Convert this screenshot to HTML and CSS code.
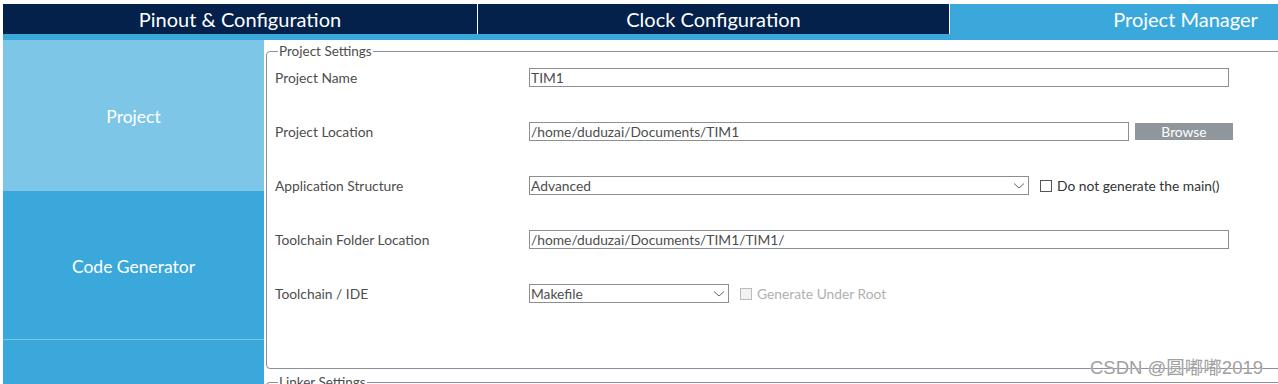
FILE: index.html
```html
<!DOCTYPE html>
<html>
	<head>
		<meta charset="utf-8"/>
		<title>Project Manager</title>
		<link rel="stylesheet" href="styles.css">
	</head>
	<body>
		<div class="tabs">
			<div class="tab">Pinout &amp; Configuration</div>
			<div class="tab">Clock Configuration</div>
			<div class="tab active">Project Manager</div>
		</div>

		<div class="main">
			<nav class="side">
				<div class="side-item current">Project</div>
				<div class="side-item">Code Generator</div>
				<div class="side-item"></div>
			</nav>

			<section class="content">
				<fieldset class="group">
					<legend>Project Settings</legend>

					<div class="row">
						<label class="label">Project Name</label>
						<div class="field wide">TIM1</div>
					</div>

					<div class="row">
						<label class="label">Project Location</label>
						<div class="field mid">/home/duduzai/Documents/TIM1</div>
						<button class="browse">Browse</button>
					</div>

					<div class="row">
						<label class="label">Application Structure</label>
						<div class="field select half">
							Advanced
							<svg class="chev" width="12" height="8" viewBox="0 0 12 8"><path d="M1 1.5 L6 6 L11 1.5" fill="none" stroke="#666" stroke-width="1"/></svg>
						</div>
						<span class="check"><span class="box"></span>Do not generate the main()</span>
					</div>

					<div class="row">
						<label class="label">Toolchain Folder Location</label>
						<div class="field wide">/home/duduzai/Documents/TIM1/TIM1/</div>
					</div>

					<div class="row">
						<label class="label">Toolchain / IDE</label>
						<div class="field select small">
							Makefile
							<svg class="chev" width="12" height="8" viewBox="0 0 12 8"><path d="M1 1.5 L6 6 L11 1.5" fill="none" stroke="#666" stroke-width="1"/></svg>
						</div>
						<span class="check disabled"><span class="box"></span>Generate Under Root</span>
					</div>
				</fieldset>

				<fieldset class="group linker">
					<legend>Linker Settings</legend>
				</fieldset>
			</section>
		</div>

		<div class="watermark">CSDN @圆嘟嘟2019</div>
	</body>
</html>
```

FILE: styles.css
```css
html, body {
	height: 384px;
	overflow: hidden;
}
body {
	margin: 0;
	padding: 4px 0 0 3px;
	font-family: Lato, "Noto Sans CJK SC", sans-serif;
	color: #4d4d4d;
	background: #fff;
	position: relative;
}
.tabs {
	display: flex;
	gap: 1px;
	width: 1420px;
	border-bottom: 6px solid #3aa8db;
	background: #fff;
}
.tab {
	flex: 0 0 471px;
	height: 30px;
	line-height: 31px;
	background: #03214a;
	color: #fff;
	font-size: 20px;
	text-align: center;
}
.tab:first-child {
	flex-basis: 474px;
}
.tab.active {
	background: #3aa8db;
}
.main {
	display: flex;
	gap: 2px;
}
.side {
	flex: 0 0 261px;
	background: #3aa8db;
	height: 400px;
}
.side-item {
	box-sizing: border-box;
	height: 149px;
	padding-top: 3px;
	border-bottom: 1px solid #7dc6e8;
	display: flex;
	align-items: center;
	justify-content: center;
	color: #fff;
	font-size: 17.5px;
}
.side-item.current {
	height: 151px;
	padding-top: 1px;
	border-bottom: 0;
	background: #7dc6e8;
}
.content {
	flex: 0 0 1040px;
	padding-top: 3px;
}
.group {
	box-sizing: border-box;
	margin: 0;
	padding: 9px 0 0 8px;
	height: 326px;
	border: 1px solid #8a9099;
	border-radius: 4px;
}
.group legend {
	font-size: 13.5px;
	padding: 0 1px;
	margin-left: 3px;
	color: #4d4d4d;
}
.linker {
	margin-top: 5px;
	border-bottom: 0;
}
.row {
	display: flex;
	align-items: center;
	height: 19px;
	margin-bottom: 35px;
}
.label {
	flex: 0 0 254px;
	font-size: 13.8px;
}
.field {
	box-sizing: border-box;
	height: 19px;
	border: 1px solid #8a8f96;
	font-size: 13.8px;
	line-height: 17px;
	padding-left: 1px;
	color: #4d4d4d;
	white-space: nowrap;
}
.wide {
	width: 700px;
}
.mid {
	width: 600px;
}
.half {
	width: 500px;
}
.small {
	width: 200px;
}
.select {
	display: flex;
	align-items: center;
	justify-content: space-between;
	padding-right: 3px;
}
.chev {
	display: block;
}
.browse {
	margin-left: 6px;
	width: 98px;
	height: 17px;
	border: 0;
	padding: 0;
	background: #8f969c;
	color: #fff;
	font-family: inherit;
	font-size: 13.8px;
	line-height: 17px;
}
.check {
	display: flex;
	align-items: center;
	margin-left: 11px;
	font-size: 13.8px;
	color: #333;
}
.box {
	width: 10px;
	height: 10px;
	border: 1px solid #555;
	margin-right: 5px;
	background: #fff;
}
.check.disabled {
	color: #b0b0b0;
}
.check.disabled .box {
	border-color: #bbb;
	background: #f2f2f2;
}
.watermark {
	position: absolute;
	left: 1090px;
	top: 353px;
	font-family: "Liberation Sans", "Noto Sans CJK SC", sans-serif;
	font-size: 18.5px;
	color: #a0a0a0;
	text-shadow: 0 0 1px #fff;
}
```
